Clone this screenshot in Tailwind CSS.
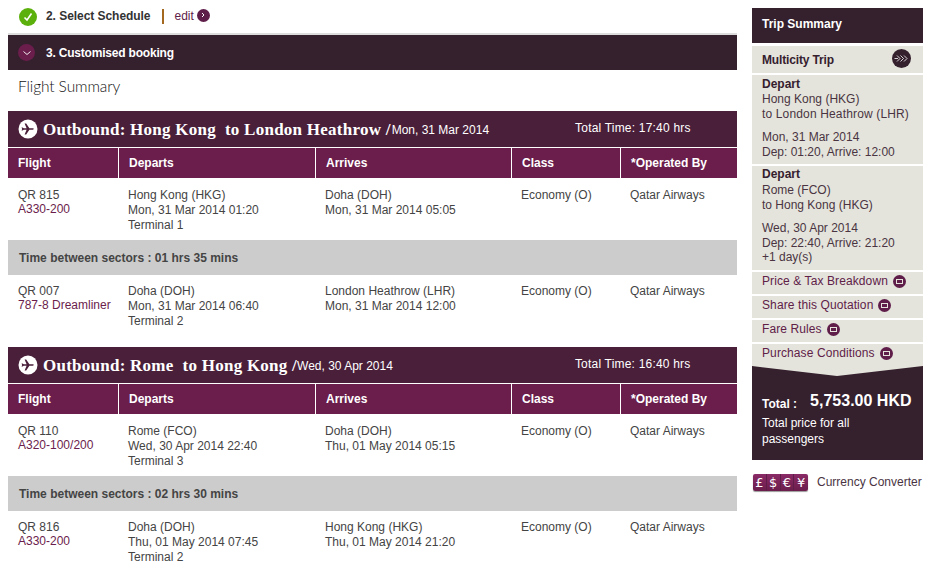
<!DOCTYPE html>
<html lang="en">
  <head>
    <meta charset="UTF-8" />
    <title>Customised booking</title>
    <script src="https://cdn.jsdelivr.net/npm/@tailwindcss/browser@4"></script>
  </head>
  <body class="bg-white font-['Liberation_Sans',sans-serif] text-[12px] leading-[15px] text-[#444] overflow-hidden h-[571px]">
    <div class="flex pl-2 h-[571px] overflow-hidden">
      <!-- Main column -->
      <main class="w-[729px] shrink-0">
        <div class="flex items-center h-[33px] pl-[11px]">
          <span class="w-[18px] h-[18px] rounded-full bg-[#5cb00c] flex items-center justify-center mr-[9px]">
            <svg width="10" height="10" viewBox="0 0 10 10"><path d="M1.5 5.5 L4 8 L8.5 1.5" fill="none" stroke="#fff" stroke-width="1.6"/></svg>
          </span>
          <span class="text-[#333] font-bold pb-[1px] tracking-[-0.05px]">2. Select Schedule</span>
          <span class="w-[2px] h-[15px] bg-[#a5681f] ml-[12px] mr-[10px]"></span>
          <span class="text-[#5f2148] pb-[1px]">edit</span>
          <span class="w-[13px] h-[13px] rounded-full bg-[#5f1d4a] ml-[3px] mb-[3px] flex items-center justify-center">
            <svg width="6" height="6" viewBox="0 0 6 6"><path d="M2 1 L4 3 L2 5" fill="none" stroke="#fff" stroke-width="1"/></svg>
          </span>
        </div>
        <div class="h-[2px] bg-[#ddd]"></div>
        <div class="h-[35px] bg-[#35202e] flex items-center pl-[10px] text-white font-bold">
          <span class="w-[17px] h-[17px] rounded-full bg-[#6b1d4c] flex items-center justify-center mr-[11px]">
            <svg width="10" height="10" viewBox="0 0 10 10"><path d="M1.5 3.5 L5 6.5 L8.5 3.5" fill="none" stroke="#fff" stroke-width="0.9"/></svg>
          </span>
          <span class="tracking-[-0.2px] pt-[1px]">3. Customised booking</span>
        </div>
        <h2 class="h-[41px] flex items-center pl-[10px] pb-[8px] font-['Lato',sans-serif] font-light text-[15.5px] tracking-[-0.1px] text-[#111]">Flight Summary</h2>

        <!-- Outbound 1 -->
        <section class="h-[236px]">
          <div class="h-[36px] bg-[#4a1f3a] text-white flex items-center pl-[10px]">
            <svg class="mr-[5px]" width="20" height="20" viewBox="0 0 20 20"><circle cx="10" cy="10" r="9.5" fill="#fff"/><path d="M3.5 8.5 L4.5 8.5 L5.8 9.3 L8.6 9.3 L6.6 4.5 L8.2 4.5 L11.4 9.3 L14.8 9.3 Q17 10 14.8 10.7 L11.4 10.7 L8.2 15.5 L6.6 15.5 L8.6 10.7 L5.8 10.7 L4.5 11.5 L3.5 11.5 L4.2 10 Z" fill="#4a1f3a"/></svg>
            <span class="font-['Liberation_Serif',serif] font-bold text-[17px] tracking-[0.25px] whitespace-pre">Outbound: Hong Kong  to London Heathrow /</span><span class="mt-[2px] ml-[1px]">Mon, 31 Mar 2014</span>
            <span class="ml-[86px] mb-[2px] tracking-[0.2px]">Total Time: 17:40 hrs</span>
          </div>
          <div class="grid grid-cols-[110px_196px_195px_108px_116px] gap-x-px h-[31px] border-t border-white text-white font-bold">
            <div class="bg-[#6b1d4c] pl-[10px] flex items-center">Flight</div>
            <div class="bg-[#6b1d4c] pl-[10px] flex items-center">Departs</div>
            <div class="bg-[#6b1d4c] pl-[10px] flex items-center">Arrives</div>
            <div class="bg-[#6b1d4c] pl-[10px] flex items-center">Class</div>
            <div class="bg-[#6b1d4c] pl-[10px] flex items-center">*Operated By</div>
          </div>
          <div class="grid grid-cols-[110px_196px_195px_108px_116px] gap-x-px h-[62px] pt-[10px]">
            <div class="pl-[10px] leading-[14px]">QR 815<br /><span class="text-[#6b1d4c]">A330-200</span></div>
            <div class="pl-[9px]">Hong Kong (HKG)<br />Mon, 31 Mar 2014 01:20<br />Terminal 1</div>
            <div class="pl-[9px]">Doha (DOH)<br />Mon, 31 Mar 2014 05:05</div>
            <div class="pl-[9px]">Economy (O)</div>
            <div class="pl-[9px]">Qatar Airways</div>
          </div>
          <div class="h-[35px] bg-[#cccccc] flex items-center pl-[11px] pt-[1px] font-bold text-[#444]">Time between sectors : 01 hrs 35 mins</div>
          <div class="grid grid-cols-[110px_196px_195px_108px_116px] gap-x-px h-[62px] pt-[9px]">
            <div class="pl-[10px] leading-[14px]">QR 007<br /><span class="text-[#6b1d4c]">787-8 Dreamliner</span></div>
            <div class="pl-[9px]">Doha (DOH)<br />Mon, 31 Mar 2014 06:40<br />Terminal 2</div>
            <div class="pl-[9px]">London Heathrow (LHR)<br />Mon, 31 Mar 2014 12:00</div>
            <div class="pl-[9px]">Economy (O)</div>
            <div class="pl-[9px]">Qatar Airways</div>
          </div>
        </section>

        <!-- Outbound 2 -->
        <section>
          <div class="h-[36px] bg-[#4a1f3a] text-white flex items-center pl-[10px]">
            <svg class="mr-[5px]" width="20" height="20" viewBox="0 0 20 20"><circle cx="10" cy="10" r="9.5" fill="#fff"/><path d="M3.5 8.5 L4.5 8.5 L5.8 9.3 L8.6 9.3 L6.6 4.5 L8.2 4.5 L11.4 9.3 L14.8 9.3 Q17 10 14.8 10.7 L11.4 10.7 L8.2 15.5 L6.6 15.5 L8.6 10.7 L5.8 10.7 L4.5 11.5 L3.5 11.5 L4.2 10 Z" fill="#4a1f3a"/></svg>
            <span class="font-['Liberation_Serif',serif] font-bold text-[17px] tracking-[0.25px] whitespace-pre">Outbound: Rome  to Hong Kong /</span><span class="mt-[2px]">Wed, 30 Apr 2014</span>
            <span class="ml-[182px] mb-[2px] tracking-[0.2px]">Total Time: 16:40 hrs</span>
          </div>
          <div class="grid grid-cols-[110px_196px_195px_108px_116px] gap-x-px h-[31px] border-t border-white text-white font-bold">
            <div class="bg-[#6b1d4c] pl-[10px] flex items-center">Flight</div>
            <div class="bg-[#6b1d4c] pl-[10px] flex items-center">Departs</div>
            <div class="bg-[#6b1d4c] pl-[10px] flex items-center">Arrives</div>
            <div class="bg-[#6b1d4c] pl-[10px] flex items-center">Class</div>
            <div class="bg-[#6b1d4c] pl-[10px] flex items-center">*Operated By</div>
          </div>
          <div class="grid grid-cols-[110px_196px_195px_108px_116px] gap-x-px h-[62px] pt-[10px]">
            <div class="pl-[10px] leading-[14px]">QR 110<br /><span class="text-[#6b1d4c]">A320-100/200</span></div>
            <div class="pl-[9px]">Rome (FCO)<br />Wed, 30 Apr 2014 22:40<br />Terminal 3</div>
            <div class="pl-[9px]">Doha (DOH)<br />Thu, 01 May 2014 05:15</div>
            <div class="pl-[9px]">Economy (O)</div>
            <div class="pl-[9px]">Qatar Airways</div>
          </div>
          <div class="h-[35px] bg-[#cccccc] flex items-center pl-[11px] pt-[1px] font-bold text-[#444]">Time between sectors : 02 hrs 30 mins</div>
          <div class="grid grid-cols-[110px_196px_195px_108px_116px] gap-x-px h-[62px] pt-[9px]">
            <div class="pl-[10px] leading-[14px]">QR 816<br /><span class="text-[#6b1d4c]">A330-200</span></div>
            <div class="pl-[9px]">Doha (DOH)<br />Thu, 01 May 2014 07:45<br />Terminal 2</div>
            <div class="pl-[9px]">Hong Kong (HKG)<br />Thu, 01 May 2014 21:20</div>
            <div class="pl-[9px]">Economy (O)</div>
            <div class="pl-[9px]">Qatar Airways</div>
          </div>
        </section>
      </main>

      <!-- Sidebar -->
      <aside class="w-[171px] ml-[15px] shrink-0 pt-2 flex flex-col">
        <div class="h-[35px] bg-[#35202e] text-white font-bold flex items-center pl-[10px] pb-[3px]">Trip Summary</div>
        <div class="h-[27px] mt-[3px] bg-[#e4e4dc] flex items-center justify-between pl-[10px] pr-[12px] font-bold text-[#35202e]">
          <span class="tracking-[-0.15px] pt-[1px]">Multicity Trip</span>
          <span class="w-[19px] h-[19px] rounded-full bg-[#35202e] flex items-center justify-center mb-[3px]">
            <svg width="15" height="9" viewBox="0 0 15 9"><path d="M0.5 4.5 H4 M3 1.5 L6 4.5 L3 7.5 M6.5 1.5 L9.5 4.5 L6.5 7.5 M10 1.5 L13 4.5 L10 7.5" fill="none" stroke="#fff" stroke-width="0.8"/></svg>
          </span>
        </div>
        <div class="mt-[2px] h-[89px] bg-[#e4e4dc] pl-[10px] pt-[2px] text-[#4a3442]">
          <div class="font-bold text-[#35202e]">Depart</div>
          Hong Kong (HKG)<br /><span class="tracking-[0.15px]">to London Heathrow (LHR)</span>
          <div class="mt-[8px]">Mon, 31 Mar 2014<br />Dep: 01:20, Arrive: 12:00</div>
        </div>
        <div class="mt-[2px] h-[104px] bg-[#e4e4dc] pl-[10px] pt-[1px] text-[#4a3442]">
          <div class="font-bold text-[#35202e] mb-[1px]">Depart</div>
          Rome (FCO)<br />to Hong Kong (HKG)
          <div class="mt-[8px] leading-[14.5px]">Wed, 30 Apr 2014<br />Dep: 22:40, Arrive: 21:20<br />+1 day(s)</div>
        </div>
        <div class="mt-[2px] h-[22px] bg-[#e4e4dc] pl-[10px] flex items-center pb-[3px] text-[#5f2148] tracking-[0.1px]">Price &amp; Tax Breakdown
          <span class="ml-[5px] w-[13px] h-[13px] rounded-full bg-[#5f1d4a] flex items-center justify-center"><span class="w-[7px] h-[5px] border border-[#e4e4dc]"></span></span>
        </div>
        <div class="mt-[2px] h-[22px] bg-[#e4e4dc] pl-[10px] flex items-center pb-[3px] text-[#5f2148] tracking-[0.1px]">Share this Quotation
          <span class="ml-[5px] w-[13px] h-[13px] rounded-full bg-[#5f1d4a] flex items-center justify-center"><span class="w-[7px] h-[5px] border border-[#e4e4dc]"></span></span>
        </div>
        <div class="mt-[2px] h-[22px] bg-[#e4e4dc] pl-[10px] flex items-center pb-[3px] text-[#5f2148] tracking-[0.1px]">Fare Rules
          <span class="ml-[5px] w-[13px] h-[13px] rounded-full bg-[#5f1d4a] flex items-center justify-center"><span class="w-[7px] h-[5px] border border-[#e4e4dc]"></span></span>
        </div>
        <div class="mt-[2px] h-[22px] bg-[#e4e4dc] pl-[10px] flex items-center pb-[3px] text-[#5f2148] tracking-[0.1px]">Purchase Conditions
          <span class="ml-[5px] w-[13px] h-[13px] rounded-full bg-[#5f1d4a] flex items-center justify-center"><span class="w-[7px] h-[5px] border border-[#e4e4dc]"></span></span>
        </div>
        <div class="h-[94px] bg-[#35202e] text-white relative pl-[10px] pt-[27px]">
          <svg class="absolute left-0 top-0" width="171" height="10" viewBox="0 0 171 10"><path d="M0 0 H171 L85 10 Z" fill="#e4e4dc"/></svg>
          <div class="flex items-start font-bold"><span class="mt-[4px]">Total :</span><span class="ml-[13px] text-[16px] leading-[16px]">5,753.00 HKD</span></div>
          <div class="mt-[3px] leading-[16px]">Total price for all<br />passengers</div>
        </div>
        <div class="flex items-center mt-[14px] ml-[1px]">
          <span class="w-[55px] h-[17px] rounded-[2px] bg-gradient-to-b from-[#8a2a66] to-[#6b1d4c] shadow-[0_1px_1px_#999] text-white grid grid-cols-4 divide-x divide-[#5f1d4a] text-[13px] leading-[17px] text-center font-['DejaVu_Sans',sans-serif]"><span>£</span><span>$</span><span>€</span><span>¥</span></span>
          <span class="ml-[9px] text-[#4a3442]">Currency Converter</span>
        </div>
      </aside>
    </div>
  </body>
</html>
